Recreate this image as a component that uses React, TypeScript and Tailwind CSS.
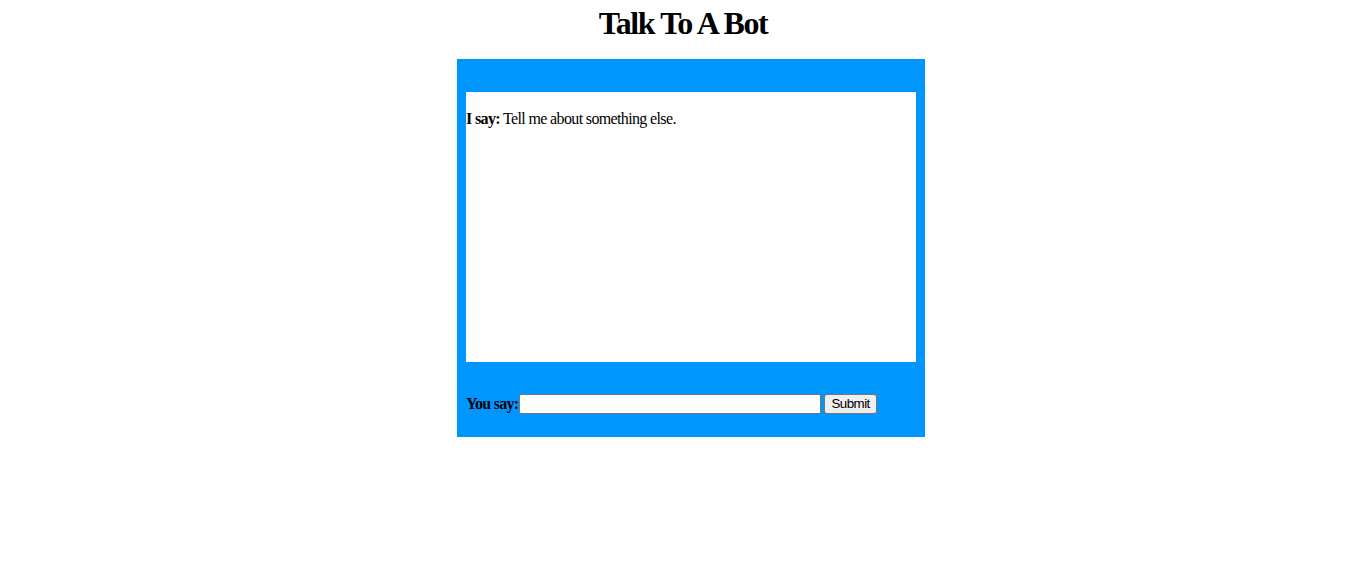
export default function App() {
  return (
    <div className="w-[1366px] h-[588px] bg-white font-['Liberation_Serif',serif] text-black">
      <h1 className="pt-[5px] text-center text-[32px] font-bold leading-[37px] tracking-[-0.043em]">
        Talk To A Bot
      </h1>

      <div className="mt-[17px] pl-[16px]">
        <div className="mx-auto w-[468px] bg-[#0096ff] px-[9px] pt-[33px] pb-[23px]">
          {/* chat log */}
          <div className="h-[270px] bg-white">
            <p className="pt-[18px] text-[16px] leading-[18px] tracking-[-0.04em]">
              <b>I say:</b> Tell me about something else.
            </p>
          </div>

          {/* input row */}
          <form className="mt-[32px] flex items-center text-[16px]" onSubmit={(e) => e.preventDefault()}>
            <b className="leading-[18px] tracking-[-0.045em]">You say:</b>
            <input
              type="text"
              className="ml-[1px] h-[20px] w-[302px] rounded-[2px] border border-[#767676] bg-white px-[2px] font-['Liberation_Sans',sans-serif] text-[13.33px]"
            />
            <button
              type="submit"
              className="ml-[3px] h-[20px] rounded-[3px] border border-[#767676] bg-[#efefef] px-[6px] font-['Liberation_Sans',sans-serif] text-[13.33px] leading-[16px] tracking-[-0.04em] text-black"
            >
              Submit
            </button>
          </form>
        </div>
      </div>
    </div>
  );
}
